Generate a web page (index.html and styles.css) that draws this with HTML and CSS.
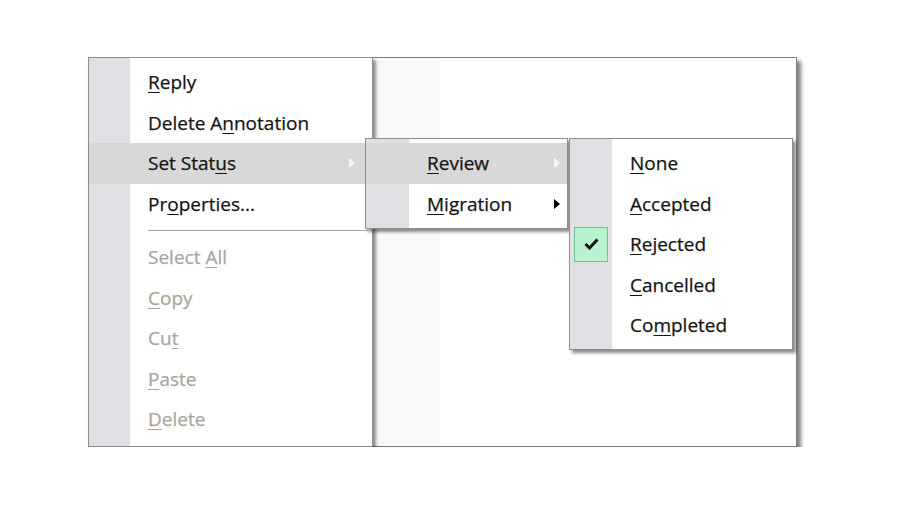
FILE: index.html
```html
<!DOCTYPE html>
<html lang="en">
<head>
    <meta charset="UTF-8">
    <meta name="viewport" content="width=device-width, initial-scale=1.0">
    <title>Annotation Context Menu</title>
    <link rel="stylesheet" href="styles.css">
</head>
<body>
    <div class="window">
        <div class="strip"></div>

        <!-- main context menu -->
        <ul class="menu menu-main">
            <li class="item"><span class="icon"></span><span class="label"><u>R</u>eply</span></li>
            <li class="item"><span class="icon"></span><span class="label">Delete A<u>n</u>notation</span></li>
            <li class="item active"><span class="icon"></span><span class="label">Set Stat<u>u</u>s</span><span class="arrow light"></span></li>
            <li class="item"><span class="icon"></span><span class="label">Pr<u>o</u>perties...</span></li>
            <li class="sep"></li>
            <li class="item disabled"><span class="icon"></span><span class="label">Select <u>A</u>ll</span></li>
            <li class="item disabled"><span class="icon"></span><span class="label"><u>C</u>opy</span></li>
            <li class="item disabled"><span class="icon"></span><span class="label">Cu<u>t</u></span></li>
            <li class="item disabled"><span class="icon"></span><span class="label"><u>P</u>aste</span></li>
            <li class="item disabled"><span class="icon"></span><span class="label"><u>D</u>elete</span></li>
        </ul>

        <!-- Set Status submenu -->
        <ul class="menu menu-sub">
            <li class="item active"><span class="icon"></span><span class="label"><u>R</u>eview</span><span class="arrow light"></span></li>
            <li class="item"><span class="icon"></span><span class="label"><u>M</u>igration</span><span class="arrow"></span></li>
        </ul>

        <!-- Review submenu -->
        <ul class="menu menu-status">
            <li class="item"><span class="icon"></span><span class="label"><u>N</u>one</span></li>
            <li class="item"><span class="icon"></span><span class="label"><u>A</u>ccepted</span></li>
            <li class="item">
                <span class="icon">
                    <span class="check">
                        <svg width="15" height="12" viewBox="0 0 15 12"><path d="M1.5 6 L5.5 10 L13.5 1.5" fill="none" stroke="#111" stroke-width="3"/></svg>
                    </span>
                </span>
                <span class="label"><u>R</u>ejected</span>
            </li>
            <li class="item"><span class="icon"></span><span class="label"><u>C</u>ancelled</span></li>
            <li class="item"><span class="icon"></span><span class="label">Co<u>m</u>pleted</span></li>
        </ul>
    </div>
</body>
</html>
```

FILE: styles.css
```css
body {
    margin: 0;
    background: #fff;
    font-family: "Open Sans", "Noto Sans", sans-serif;
}

.window {
    position: relative;
    box-sizing: border-box;
    width: 709px;
    height: 390px;
    margin: 57px 0 0 88px;
    background: #fff;
    border: 1px solid #7c7c7c;
    box-shadow: 4px 4px 4px rgba(0, 0, 0, 0.5);
}

/* faint column in the page behind the menus */
.strip {
    margin-left: 288px;
    width: 63px;
    height: 100%;
    background: #f9f9f9;
}

.menu {
    position: absolute;
    box-sizing: border-box;
    margin: 0;
    padding: 4px 0;
    list-style: none;
    border: 1px solid #8e8e8e;
    background: linear-gradient(to right, #dfdfe4 42px, #fff 42px);
    box-shadow: 3px 3px 3px rgba(0, 0, 0, 0.45);
    font-size: 19px;
    color: #141414;
    -webkit-text-stroke: 0.25px currentColor;
}

.menu-main {
    left: -1px;
    top: -1px;
    width: 285px;
    height: 390px;
    padding-right: 17px;
    background: linear-gradient(to right, #dfdfe4 41px, #fff 41px);
}

.menu-sub {
    left: 276px;
    top: 80px;
    width: 203px;
    height: 91px;
    padding-right: 7px;
    background: linear-gradient(to right, #dfdfe4 43px, #fff 43px);
}

.menu-status {
    left: 480px;
    top: 80px;
    width: 224px;
    height: 212px;
}

.item {
    display: flex;
    align-items: center;
    height: 40.5px;
}

.menu-main .item.active {
    margin-right: -17px;
    padding-right: 17px;
}

.menu-sub .item.active {
    margin-right: -7px;
    padding-right: 7px;
}

.item.active {
    background: #d8d8d8;
}

.item.disabled {
    color: #aaa59e;
}

.icon {
    display: flex;
    justify-content: center;
    align-items: center;
    flex: none;
    width: 42px;
    height: 100%;
}

.menu-main .icon {
    width: 41px;
}

.menu-sub .icon {
    width: 43px;
}

.label {
    margin-left: 18px;
    white-space: nowrap;
}

.label u {
    text-underline-offset: 3px;
}

.arrow {
    margin-left: auto;
    width: 0;
    height: 0;
    border-top: 5px solid transparent;
    border-bottom: 5px solid transparent;
    border-left: 6px solid #000;
}

.arrow.light {
    border-left-color: #f7f7f7;
}

.sep {
    height: 1px;
    margin: 6px -13px 6px 59px;
    background: #a4a4a4;
}

.check {
    display: flex;
    justify-content: center;
    align-items: center;
    box-sizing: border-box;
    width: 34px;
    height: 35px;
    background: #b7f3cf;
    border: 1px solid #72c08e;
}
```
